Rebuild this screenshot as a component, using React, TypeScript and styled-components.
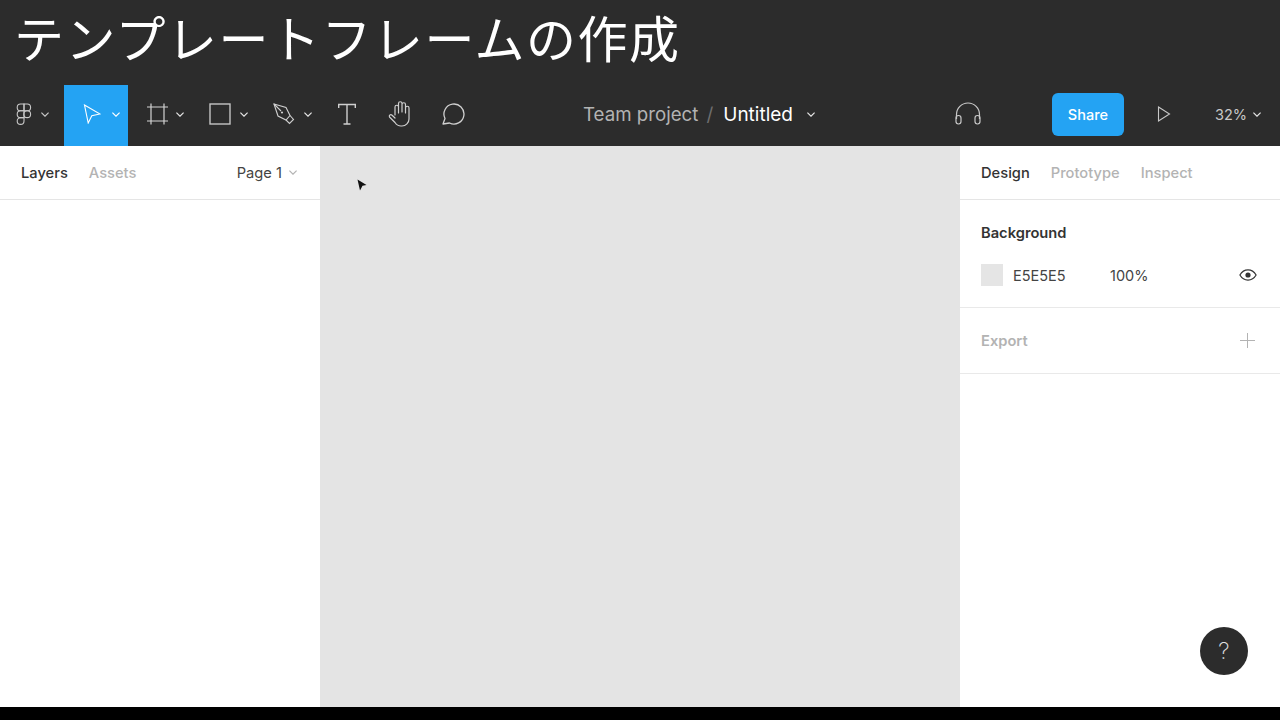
import React from 'react';
import styled, {createGlobalStyle} from 'styled-components';

const GlobalStyle = createGlobalStyle`
  html, body {
    margin: 0;
    padding: 0;
    height: 100%;
    background: #000;
    overflow: hidden;
  }
  body {
    font-family: Inter, "Noto Sans CJK JP", sans-serif;
  }
`;

function Chevron({color = 'currentColor'}: {color?: string}) {
  return (
    <ChevronSvg width="8" height="5" viewBox="0 0 8 5" fill="none" stroke={color} strokeWidth="1.2">
      <path d="M0.4 0.6 L4 4.2 L7.6 0.6" />
    </ChevronSvg>
  );
}

function FigmaIcon() {
  return (
    <svg width="16" height="24" viewBox="0 0 16 24" fill="none" stroke="#c8c8c8" strokeWidth="1.1">
      <path d="M8 2 H4.6 a3.4 3.4 0 0 0 0 6.8 H8 Z" />
      <path d="M8 2 h3.2 a3.4 3.4 0 0 1 0 6.8 H8 Z" />
      <path d="M8 8.8 H4.6 a3.4 3.4 0 0 0 0 6.8 H8 Z" />
      <circle cx="11.2" cy="12.2" r="3.4" />
      <path d="M8 15.6 H4.6 a3.4 3.4 0 1 0 3.4 3.4 Z" />
    </svg>
  );
}

function MoveIcon() {
  return (
    <svg width="18" height="20" viewBox="0 0 18 20" fill="none" stroke="#fff" strokeWidth="1.1">
      <path d="M1.5 1 L17 10 L8.8 11.8 L5.2 19 Z" />
    </svg>
  );
}

function FrameIcon() {
  return (
    <svg width="24" height="22" viewBox="0 0 24 22" fill="none" stroke="#d4d4d4" strokeWidth="1.2">
      <path d="M3 4 H24 M3 18 H24 M7 0.5 V21.5 M20 0.5 V21.5" />
    </svg>
  );
}

function RectIcon() {
  return (
    <svg width="22" height="22" viewBox="0 0 22 22" fill="none" stroke="#c4c4c4" strokeWidth="1.4">
      <rect x="1" y="1" width="20" height="20" />
    </svg>
  );
}

function PenIcon() {
  return (
    <svg width="22" height="22" viewBox="0 0 22 22" fill="none" stroke="#d0d0d0" strokeWidth="1.1">
      <path d="M1 1 L13 4.5 L17 12.5 L13 17 L5 13 Z" />
      <path d="M1 1 L8 8" />
      <circle cx="9" cy="9.5" r="1.1" fill="#d0d0d0" stroke="none" />
      <path d="M13 17 L16.5 20.5 L20.5 16.5 L17 12.5" />
    </svg>
  );
}

function TextIcon() {
  return (
    <svg width="18" height="24" viewBox="0 0 18 24" fill="none" stroke="#cfcfcf" strokeWidth="1.4">
      <path d="M0.7 6 V2.5 H17.3 V6 M9 2.5 V22 M5.5 22 H12.5" />
    </svg>
  );
}

function HandIcon() {
  return (
    <svg width="24" height="28" viewBox="0 0 24 28" fill="none" stroke="#d0d0d0" strokeWidth="1.2" strokeLinejoin="round" strokeLinecap="round">
      <path d="M7 15 V7 a1.75 1.75 0 0 1 3.5 0 V13 M10.5 12 V3.5 a1.75 1.75 0 0 1 3.5 0 V12 M14 12 V4.5 a1.75 1.75 0 0 1 3.5 0 V13 M17.5 13 V8 a1.75 1.75 0 0 1 3.5 0 V19 a7 7 0 0 1 -7 7 h-1 c-3 0 -4.5 -1.2 -6 -3.5 L1.5 17 c-0.8 -1.5 1 -3 2.6 -1.8 L7 18" />
    </svg>
  );
}

function CommentIcon() {
  return (
    <svg width="24" height="24" viewBox="0 0 24 24" fill="none" stroke="#d0d0d0" strokeWidth="1.3">
      <path d="M2 22 L4 16.5 A10 10 0 1 1 8.5 21 Z" strokeLinejoin="round" />
    </svg>
  );
}

function HeadphonesIcon() {
  return (
    <svg width="26" height="24" viewBox="0 0 26 24" fill="none" stroke="#c8c8c8" strokeWidth="1.2">
      <path d="M1.5 17 V12.5 a11.5 11.5 0 0 1 23 0 V17" />
      <rect x="1" y="13.5" width="5" height="8.5" rx="2.4" />
      <rect x="20" y="13.5" width="5" height="8.5" rx="2.4" />
    </svg>
  );
}

function PlayIcon() {
  return (
    <svg width="14" height="16" viewBox="0 0 14 16" fill="none" stroke="#c8c8c8" strokeWidth="1.1">
      <path d="M1.5 1 L12.5 8 L1.5 15 Z" />
    </svg>
  );
}

function EyeIcon() {
  return (
    <svg width="18" height="12" viewBox="0 0 18 12" fill="none" stroke="#333" strokeWidth="1.2">
      <path d="M0.9 6 C3 2.4 5.8 0.9 9 0.9 C12.2 0.9 15 2.4 17.1 6 C15 9.6 12.2 11.1 9 11.1 C5.8 11.1 3 9.6 0.9 6 Z" />
      <circle cx="9" cy="6" r="2.6" fill="#333" stroke="none" />
    </svg>
  );
}

function PlusIcon() {
  return (
    <svg width="15" height="15" viewBox="0 0 15 15" fill="none" stroke="#b3b3b3" strokeWidth="1">
      <path d="M7.5 0 V15 M0 7.5 H15" />
    </svg>
  );
}

export default function App(): JSX.Element {
  return (
    <Page>
      <GlobalStyle />
      <TitleBar>テンプレートフレームの作成</TitleBar>
      <Toolbar>
        <ToolGroup>
          <MenuTool><FigmaIcon /><Chevron /></MenuTool>
          <Tool $active><IconSlot><MoveIcon /></IconSlot><Chevron color="#fff" /></Tool>
          <Tool><IconSlot><FrameIcon /></IconSlot><Chevron color="#e6e6e6" /></Tool>
          <Tool><IconSlot><RectIcon /></IconSlot><Chevron color="#e6e6e6" /></Tool>
          <Tool><IconSlot><PenIcon /></IconSlot><Chevron color="#e6e6e6" /></Tool>
          <PlainTool><TextIcon /></PlainTool>
          <PlainTool><HandIcon /></PlainTool>
          <PlainTool><CommentIcon /></PlainTool>
        </ToolGroup>
        <FileName>
          <Team>Team project</Team>
          <Slash>/</Slash>
          <Untitled>Untitled</Untitled>
          <Chevron color="#e6e6e6" />
        </FileName>
        <RightGroup>
          <Headphones><HeadphonesIcon /></Headphones>
          <ShareButton>Share</ShareButton>
          <Play><PlayIcon /></Play>
          <Zoom>32%<Chevron color="#e6e6e6" /></Zoom>
        </RightGroup>
      </Toolbar>
      <Main>
        <LeftPanel>
          <TabRow>
            <Tab $active>Layers</Tab>
            <Tab>Assets</Tab>
            <PageSelect>Page 1<Chevron color="#b3b3b3" /></PageSelect>
          </TabRow>
        </LeftPanel>
        <Canvas>
          <Cursor width="10" height="12" viewBox="0 0 10 12">
            <path d="M0.5 0.5 L9.5 6 L5.5 6.8 L3 11.5 Z" fill="#111" />
          </Cursor>
        </Canvas>
        <RightPanel>
          <TabRow>
            <Tab $active>Design</Tab>
            <Tab>Prototype</Tab>
            <Tab>Inspect</Tab>
          </TabRow>
          <BackgroundSection>
            <SectionTitle>Background</SectionTitle>
            <ColorRow>
              <Swatch />
              <HexValue>E5E5E5</HexValue>
              <Opacity>100%</Opacity>
              <EyeIcon />
            </ColorRow>
          </BackgroundSection>
          <ExportSection>
            <SectionTitle $muted>Export</SectionTitle>
            <PlusIcon />
          </ExportSection>
          <HelpButton>?</HelpButton>
        </RightPanel>
      </Main>
    </Page>
  );
}

const Page = styled.div`
  display: flex;
  flex-direction: column;
  width: 1280px;
  height: 707px;
`;
const TitleBar = styled.h1`
  height: 85px;
  margin: 0;
  padding-left: 14px;
  background: #2c2c2c;
  color: #fff;
  font-family: "Noto Sans CJK JP", sans-serif;
  font-size: 50px;
  font-weight: 400;
  letter-spacing: 1.5px;
  line-height: 73px;
  white-space: nowrap;
`;
const Toolbar = styled.div`
  display: flex;
  position: relative;
  align-items: stretch;
  justify-content: space-between;
  height: 61px;
  background: #2c2c2c;
`;
const ToolGroup = styled.div`
  display: flex;
  align-items: stretch;
`;
const Tool = styled.div<{$active?: boolean}>`
  display: flex;
  align-items: center;
  box-sizing: border-box;
  width: 64px;
  padding: 0 0 3px 8px;
  background: ${({$active}) => ($active ? '#24a3f3' : 'transparent')};
`;
const IconSlot = styled.div`
  display: flex;
  justify-content: center;
  width: 40px;
`;
const MenuTool = styled(Tool)`
  gap: 9px;
  justify-content: center;
  padding-left: 0;
  color: #c8c8c8;
`;
const PlainTool = styled.div`
  display: flex;
  align-items: center;
  justify-content: center;
  box-sizing: border-box;
  width: 53px;
  padding-bottom: 3px;
`;
const FileName = styled.div`
  display: flex;
  position: absolute;
  top: 0;
  bottom: 3px;
  left: 583px;
  align-items: center;
  font-size: 19px;
`;
const Team = styled.span`
  color: #b3b3b3;
  font-size: 18.7px;
`;
const Slash = styled.span`
  margin: 0 10px 0 8px;
  color: #6e6e6e;
`;
const Untitled = styled.span`
  margin-right: 14px;
  color: #fff;
`;
const RightGroup = styled.div`
  display: flex;
  align-items: center;
  padding-bottom: 3px;
`;
const Headphones = styled.div`
  display: flex;
  margin-right: 71px;
`;
const ShareButton = styled.button`
  width: 72px;
  height: 43px;
  padding: 0;
  border: 0;
  border-radius: 6px;
  background: #24a3f3;
  color: #fff;
  font-family: inherit;
  font-size: 14.5px;
  font-weight: 500;
`;
const Play = styled.div`
  display: flex;
  margin-left: 33px;
  margin-right: 44px;
`;
const Zoom = styled.div`
  display: flex;
  align-items: center;
  gap: 6px;
  margin-right: 19px;
  color: #c8c8c8;
  font-size: 14.5px;
`;
const ChevronSvg = styled.svg`
  flex: none;
`;
const Main = styled.div`
  display: flex;
  flex: 1;
  min-height: 0;
`;
const LeftPanel = styled.aside`
  width: 320px;
  background: #fff;
`;
const Canvas = styled.main`
  position: relative;
  flex: 1;
  background: #e4e4e4;
`;
const Cursor = styled.svg`
  position: absolute;
  top: 33px;
  left: 37px;
`;
const RightPanel = styled.aside`
  display: flex;
  position: relative;
  flex-direction: column;
  width: 320px;
  background: #fff;
`;
const TabRow = styled.div`
  display: flex;
  align-items: center;
  gap: 21px;
  box-sizing: border-box;
  height: 54px;
  padding: 0 21px;
  border-bottom: 1.5px solid #e5e5e5;
`;
const Tab = styled.span<{$active?: boolean}>`
  color: ${({$active}) => ($active ? '#333' : '#b3b3b3')};
  font-size: 14.7px;
  font-weight: 500;
`;
const PageSelect = styled.span`
  display: flex;
  align-items: center;
  gap: 7px;
  margin-left: auto;
  margin-right: 2px;
  color: #444;
  font-size: 14.7px;
`;
const BackgroundSection = styled.section`
  box-sizing: border-box;
  height: 108px;
  padding: 24px 21px 0;
  border-bottom: 1.5px solid #e9e9e9;
`;
const SectionTitle = styled.div<{$muted?: boolean}>`
  color: ${({$muted}) => ($muted ? '#b3b3b3' : '#333')};
  font-size: 14.7px;
  font-weight: 600;
  line-height: 18px;
`;
const ColorRow = styled.div`
  display: flex;
  align-items: center;
  margin-top: 22px;
  padding-right: 2px;
`;
const Swatch = styled.div`
  width: 22px;
  height: 22px;
  background: #e5e5e5;
`;
const HexValue = styled.span`
  width: 97px;
  margin-left: 10px;
  color: #444;
  font-size: 14.5px;
`;
const Opacity = styled.span`
  margin-right: auto;
  color: #444;
  font-size: 14.5px;
`;
const ExportSection = styled.section`
  display: flex;
  align-items: center;
  justify-content: space-between;
  box-sizing: border-box;
  height: 66px;
  padding: 0 25px 0 21px;
  border-bottom: 1.5px solid #e9e9e9;
`;
const HelpButton = styled.div`
  display: flex;
  position: absolute;
  right: 32px;
  bottom: 32px;
  align-items: center;
  justify-content: center;
  width: 48px;
  height: 48px;
  border-radius: 50%;
  background: #2c2c2c;
  color: #e0e0e0;
  font-size: 23px;
  font-weight: 200;
`;
